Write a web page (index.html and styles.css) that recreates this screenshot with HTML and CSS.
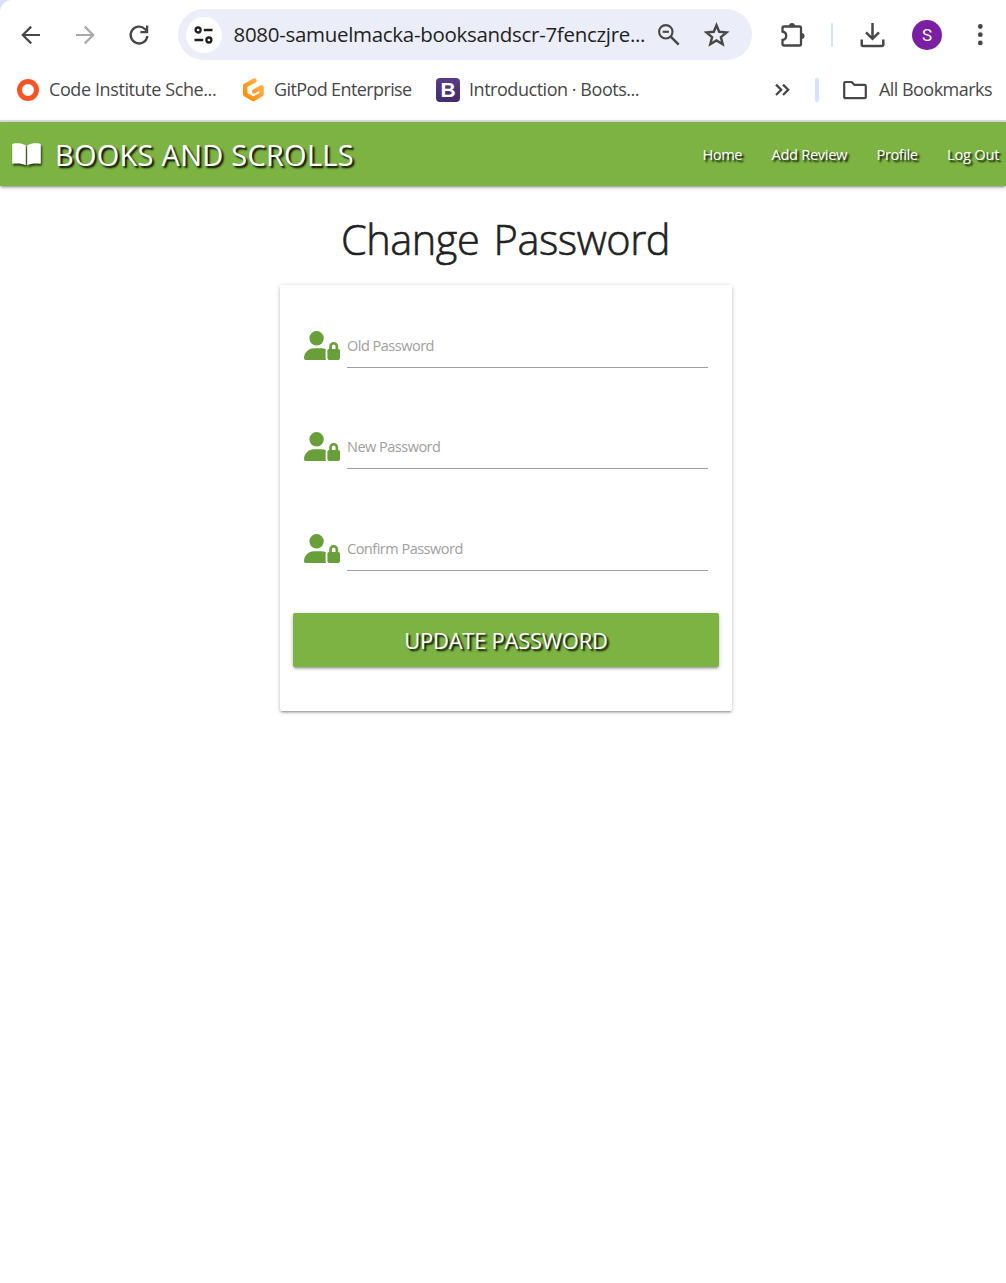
FILE: index.html
```html
<!DOCTYPE html>
<html lang="en">
<head>
<meta charset="utf-8">
<title>Change Password</title>
<link rel="stylesheet" href="styles.css">
</head>
<body>
<header class="browser">
  <div class="toolbar">
    <svg class="back" width="24" height="24" viewBox="0 0 24 24" fill="none" stroke="#474747" stroke-width="2.2"><path d="M21 12H4M12.2 3.6 3.8 12l8.4 8.4"/></svg>
    <svg class="forward" width="24" height="24" viewBox="0 0 24 24" fill="none" stroke="#a9a9a9" stroke-width="2.2"><path d="M3 12h17M11.8 3.6 20.2 12l-8.4 8.4"/></svg>
    <svg class="reload" width="24" height="24" viewBox="0 0 24 24" fill="none" stroke="#474747" stroke-width="2.3"><path d="M20.4 13a8.4 8.4 0 1 1-2.3-6.800l2 2"/><path d="M20.1 2.500v6.700h-6.700"/></svg>
    <div class="omnibox">
      <span class="site"><svg width="24" height="24" viewBox="0 0 24 24" fill="none" stroke="#1f1f1f" stroke-width="2.3"><circle cx="6.100" cy="7" r="2.500"/><path d="M11.800 7h8.700M2.500 17h8.700"/><circle cx="16.900" cy="17" r="2.500"/></svg></span>
      <span class="url">8080-samuelmacka-booksandscr-7fenczjre...</span>
      <svg class="lens" width="24" height="24" viewBox="0 0 24 24" fill="none" stroke="#474747" stroke-width="2.1"><circle cx="8.800" cy="8.800" r="6.700"/><path d="m13.700 13.700 8 8" stroke-width="2.500"/><path d="M5.700 8.800h6.200"/></svg>
      <svg class="star" width="26" height="26" viewBox="0 0 26 26" fill="none" stroke="#474747" stroke-width="2.4"><path d="m12.500 3.200 2.700 6.600 7.400.6-5.700 4.700 1.800 7.100-6.200-3.800-6.200 3.800 1.800-7.100-5.700-4.700 7.400-.6z"/></svg>
    </div>
    <svg class="puzzle" width="26" height="26" viewBox="0 0 26 26"><path d="M4 4.500h15.500q1.500 0 1.500 1.500v16q0 1.500-1.500 1.500H4q-1.500 0-1.500-1.500v-4c5-1 5-7.500 0-8.500V6q0-1.500 1.500-1.500z" fill="none" stroke="#474747" stroke-width="2.300"/><path d="M9 4a3 3 0 0 1 6 0zM21.500 11a3 3 0 0 1 0 6z" fill="#474747"/></svg>
    <i class="rule thin"></i>
    <svg class="download" width="26" height="26" viewBox="0 0 26 26" fill="none" stroke="#474747" stroke-width="2.5"><path d="M12.500 1v15M6 10.300l6.500 6.500 6.500-6.500M1.700 17.500v5q0 1.500 1.500 1.500h18.600q1.500 0 1.500-1.500v-5"/></svg>
    <span class="avatar">S</span>
    <svg class="dots" width="6" height="24" viewBox="0 0 6 24" fill="#474747"><circle cx="3.300" cy="3.500" r="2.400"/><circle cx="3.300" cy="11.700" r="2.400"/><circle cx="3.300" cy="19.900" r="2.400"/></svg>
  </div>
  <div class="bookmarks">
    <span class="ring"></span>
    <span class="bm bm-code">Code Institute Sche...</span>
    <svg class="gitpod" width="24" height="26" viewBox="0 0 24 26"><defs><linearGradient id="gp" x1="1" y1="0" x2="0" y2="1"><stop offset="0" stop-color="#ffb45b"/><stop offset="1" stop-color="#ff8a00"/></linearGradient></defs><path d="M13.500 3.500 4.200 8.700v8.600L12.400 22l8.200-4.700V10.200l-7.400 4.200" fill="none" stroke="url(#gp)" stroke-width="4.400" stroke-linejoin="round" stroke-linecap="round"/></svg>
    <span class="bm bm-gitpod">GitPod Enterprise</span>
    <span class="boots">B</span>
    <span class="bm bm-boots">Introduction · Boots...</span>
    <svg class="more" width="16" height="14" viewBox="0 0 16 14" fill="none" stroke="#474747" stroke-width="2.3"><path d="m1 1.600 5.200 5.200L1 12M8 1.600l5.200 5.200L8 12"/></svg>
    <i class="rule wide"></i>
    <svg class="folder" width="26" height="20" viewBox="0 0 26 20" fill="none" stroke="#474747" stroke-width="2.2" stroke-linejoin="round"><path d="M2.200 17V3.200Q2.200 2 3.400 2h6.300l2.800 2.900h10q1.300 0 1.300 1.300V17q0 1.200-1.300 1.200H3.400Q2.200 18.200 2.200 17z"/></svg>
    <span class="bm bm-all">All Bookmarks</span>
  </div>
</header>
<nav class="nav">
  <svg class="book" width="30" height="25" viewBox="0 0 30 25"><path d="M13.800 3.300C10.500 1.100 4.500.8.900 1.700Q.2 1.900.2 2.700V21q0 1 1 .8c4-.6 9.300-.3 12.600 1.400zM15.200 3.300c3.300-2.200 9.300-2.500 12.900-1.600q.7.200.7 1V21q0 1-1 .8c-4-.6-9.300-.3-12.600 1.400z" fill="#fff"/></svg>
  <a class="brand">BOOKS AND SCROLLS</a>
  <a class="link home">Home</a>
  <a class="link add">Add Review</a>
  <a class="link profile">Profile</a>
  <a class="link logout">Log Out</a>
</nav>
<main>
  <h1>Change Password</h1>
  <form class="card">
    <div class="field"><svg class="lock" viewBox="0 0 640 512"><use href="#user-lock"/></svg><label>Old Password</label></div>
    <div class="field"><svg class="lock" viewBox="0 0 640 512"><use href="#user-lock"/></svg><label>New Password</label></div>
    <div class="field"><svg class="lock" viewBox="0 0 640 512"><use href="#user-lock"/></svg><label>Confirm Password</label></div>
    <button type="button">UPDATE PASSWORD</button>
  </form>
  <svg width="0" height="0"><defs><path id="user-lock" d="M224 256A128 128 0 1 0 224 0a128 128 0 1 0 0 256zM178 304C80 304 0 384 0 482c0 17 13 30 30 30h362c-5-9-8-20-8-32V352c0-11 2-21 7-30-26-12-51-18-80-18zM528 240c18 0 32 14 32 32v48h-64v-48c0-18 14-32 32-32zm-80 32v48c-18 0-32 14-32 32v128c0 18 14 32 32 32h160c18 0 32-14 32-32V352c0-18-14-32-32-32v-48c0-44-36-80-80-80s-80 36-80 80z"/></defs></svg>
</main>
</body>
</html>
```
FILE: styles.css
```css
* { box-sizing: border-box; }
body { margin: 0; min-height: 100vh; background: #fff; color: #202124; font-family: "Open Sans", "Noto Sans", sans-serif; }
svg { display: block; flex: none; }

.browser { height: 122px; border-bottom: 2px solid #e0e0e0; background: radial-gradient(circle at 12px 12px, #fff 11.5px, #d3e3fd 12.5px) 0 0 / 12px 12px no-repeat; }
.toolbar { height: 69px; display: flex; align-items: center; padding-left: 19px; }
.forward { margin-left: 30px; }
.reload { margin-left: 30px; }
.omnibox { margin-left: 27px; width: 574px; height: 51px; border-radius: 26px; background: #ebeef8; display: flex; align-items: center; padding-left: 8px; flex: none; }
.site { width: 36px; height: 36px; border-radius: 50%; background: #fff; display: grid; place-items: center; flex: none; }
.url { margin-left: 11.5px; width: 423px; padding-bottom: 2px; font-size: 20.5px; letter-spacing: -.3px; color: #1f1f1f; white-space: nowrap; flex: none; }
.star { margin-left: 23px; }
.puzzle { margin-left: 28px; }
.rule { background: #d3e3fd; border-radius: 2px; flex: none; height: 24px; }
.thin { width: 2px; margin-left: 25px; }
.download { margin-left: 27px; }
.avatar { margin-left: 26px; width: 30px; height: 30px; border-radius: 50%; background: #7b1fa2; color: #fff; font: 17px/30px Roboto, sans-serif; text-align: center; flex: none; }
.dots { margin-left: 35px; }

.bookmarks { height: 42px; display: flex; align-items: center; padding-left: 17px; }
.ring { width: 22px; height: 22px; border: 5.5px solid #f75424; border-radius: 50%; flex: none; }
.bm { padding-bottom: 2px; font-size: 18px; color: #474747; white-space: nowrap; flex: none; }
.bm-code { margin-left: 10px; width: 192px; letter-spacing: -.4px; }
.bm-gitpod { margin-left: 9px; width: 162px; letter-spacing: -.61px; }
.boots { width: 24px; height: 24px; border-radius: 4px; background: linear-gradient(#593d88, #432c69); color: #fff; font: bold 21px/24px "Liberation Sans", sans-serif; text-align: center; flex: none; }
.bm-boots { margin-left: 9px; width: 306px; letter-spacing: -.46px; }
.wide { width: 4px; margin-left: 24px; }
.folder { margin-left: 23px; }
.bm-all { margin-left: 11px; letter-spacing: -.54px; }

.nav { height: 64px; background: #7cb342; display: flex; align-items: center; box-shadow: 0 2px 2px 0 rgba(0,0,0,.14), 0 3px 1px -2px rgba(0,0,0,.12), 0 1px 5px 0 rgba(0,0,0,.2); color: #fff; }
.nav a { text-shadow: 2px 2px 2px #000; white-space: nowrap; flex: none; }
.book { margin-left: 12px; filter: drop-shadow(1px 2px 1px rgba(0,0,0,.7)); }
.brand { margin-left: 13px; width: 647.5px; font-size: 29px; letter-spacing: .25px; }
.link { font-size: 14.7px; }
.home { width: 69px; letter-spacing: -.5px; }
.add { width: 105px; letter-spacing: -.35px; }
.profile { width: 70.5px; letter-spacing: -.45px; }
.logout { letter-spacing: -.25px; }

h1 { margin: 20px 0 0; padding-left: 5px; height: 66px; line-height: 66px; font-size: 41.5px; font-weight: 300; letter-spacing: -.45px; word-spacing: 4px; text-align: center; color: #212121; -webkit-text-stroke: .6px #212121; }
.card { width: 452px; height: 426px; margin: 13px 0 0 280px; padding: 32px 13px 0; border-radius: 2px; box-shadow: 0 2px 2px 0 rgba(0,0,0,.14), 0 3px 1px -2px rgba(0,0,0,.12), 0 1px 5px 0 rgba(0,0,0,.2); }
.field { height: 101.4px; padding: 0 11px; display: flex; }
.lock { width: 36px; height: 29px; margin-top: 14px; fill: #689f38; }
.field label { margin-left: 7px; width: 361px; height: 51px; border-bottom: 1px solid #9e9e9e; line-height: 57.4px; font-size: 14.5px; letter-spacing: -.5px; color: #9e9e9e; }
button { display: block; width: 426px; height: 54px; margin-top: -8.2px; padding: 0; border: 0; border-radius: 2px; background: #7cb342; color: #fff; font: 22px/54px "Open Sans", sans-serif; letter-spacing: -.27px; text-shadow: 2px 2px 2px #000; box-shadow: 0 2px 2px 0 rgba(0,0,0,.14), 0 3px 1px -2px rgba(0,0,0,.12), 0 1px 5px 0 rgba(0,0,0,.2); }
```
